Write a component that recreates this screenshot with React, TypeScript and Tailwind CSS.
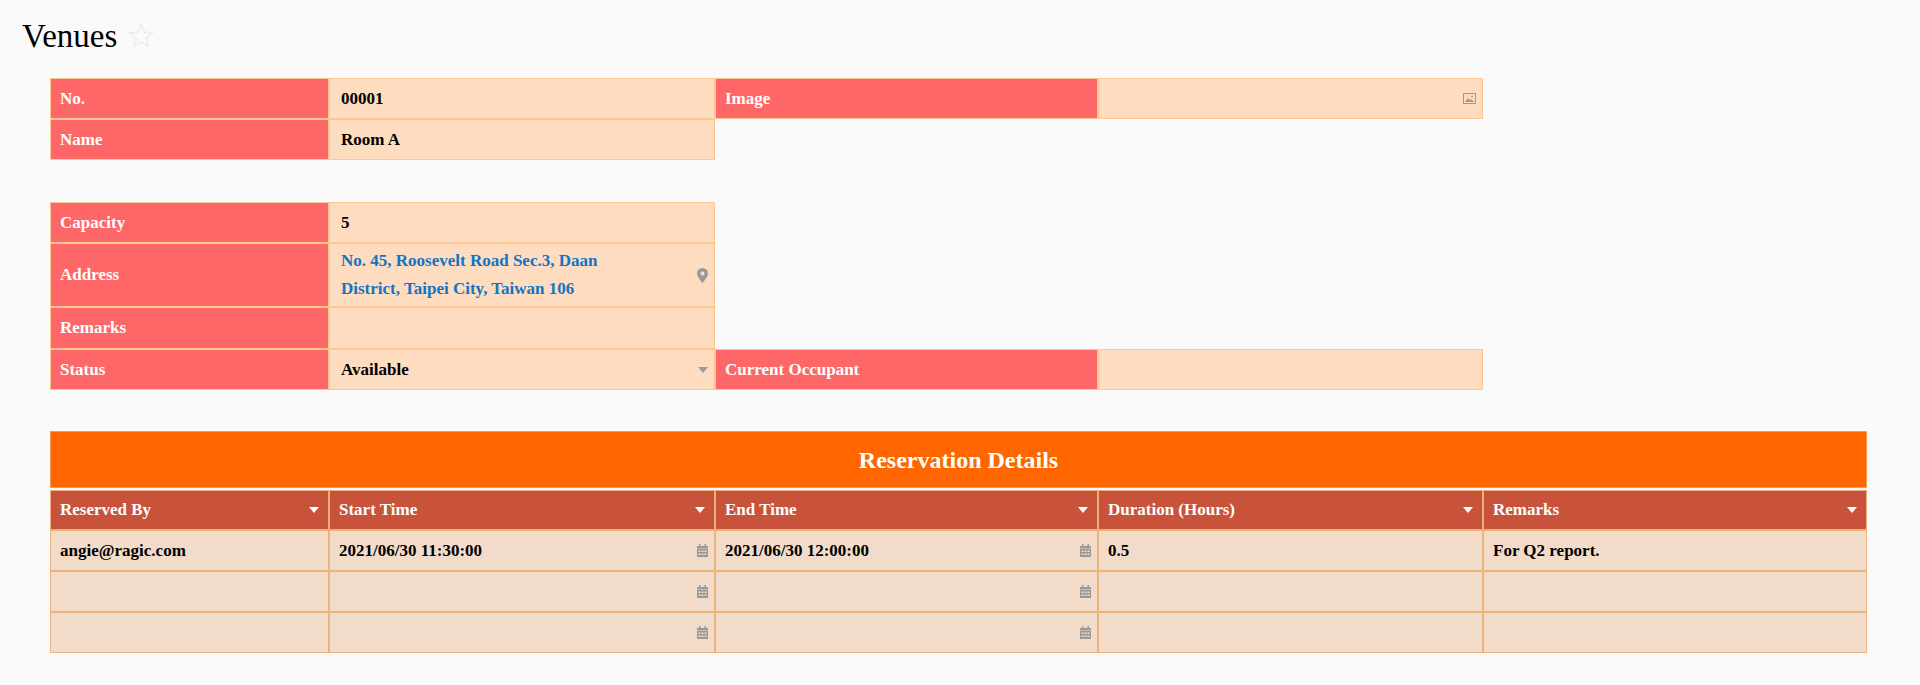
import React from "react";

const F = { fontFamily: '"Liberation Serif", "DejaVu Serif", serif' };

function Label({ children, h = "h-[41px]" }: { children?: React.ReactNode; h?: string }) {
  return (
    <div className={`${h} bg-[#fe6767] border border-[#fbc795] flex items-center px-[9px] text-white font-bold text-[17px]`}>
      {children}
    </div>
  );
}
function Val({ children, h = "h-[41px]", icon }: { children?: React.ReactNode; h?: string; icon?: React.ReactNode }) {
  return (
    <div className={`${h} bg-[#fddcbf] border border-[#fbc795] flex items-center justify-between pl-[11px] pr-[6px] text-black font-bold text-[17px]`}>
      <div>{children}</div>
      {icon}
    </div>
  );
}

const Caret = ({ c = "#9b9b9b" }: { c?: string }) => (
  <svg width="10" height="6" viewBox="0 0 10 6"><path d="M0 0h10L5 6z" fill={c} /></svg>
);
const Cal = () => (
  <svg width="11" height="13" viewBox="0 0 11 13" fill="#999">
    <rect x="2" y="0" width="1.5" height="3" />
    <rect x="7.5" y="0" width="1.5" height="3" />
    <rect x="0" y="2" width="11" height="2.5" />
    <path d="M0 5h11v8H0z M1.5 6.5v1.5h2V6.5z M4.5 6.5v1.5h2V6.5z M7.5 6.5v1.5h2V6.5z M1.5 9.5v1.5h2V9.5z M4.5 9.5v1.5h2V9.5z M7.5 9.5v1.5h2V9.5z" fillRule="evenodd" />
  </svg>
);
const Pin = () => (
  <svg width="11" height="15" viewBox="0 0 11 15"><path d="M5.5 0A5.5 5.5 0 0 0 0 5.5C0 9 5.5 15 5.5 15S11 9 11 5.5A5.5 5.5 0 0 0 5.5 0zm0 7.5a2 2 0 1 1 0-4 2 2 0 0 1 0 4z" fill="#999" /></svg>
);
const Img = () => (
  <svg width="13" height="11" viewBox="0 0 13 11"><rect x="0.5" y="0.5" width="12" height="10" fill="none" stroke="#999" /><path d="M2 9l3-4 2 2.5 1.5-1.5L11 9z" fill="#999" /><circle cx="9" cy="3.5" r="1" fill="#999" /></svg>
);

function HCell({ children }: { children: React.ReactNode }) {
  return (
    <div className="h-[40px] bg-[#c9523b] border border-[#efae7e] flex items-center justify-between px-[9px] text-white font-bold text-[17px]">
      <span>{children}</span>
      <Caret c="#ffffff" />
    </div>
  );
}
function DCell({ children, cal }: { children?: React.ReactNode; cal?: boolean }) {
  return (
    <div className="h-[41px] bg-[#f2dcc9] border border-[#ebb47f] flex items-center justify-between pl-[9px] pr-[6px] text-black font-bold text-[17px]">
      <span>{children}</span>
      {cal && <Cal />}
    </div>
  );
}

export default function App() {
  const cols = "grid grid-cols-[279px_386px_383px_385px]";
  return (
    <div className="min-h-[685px] bg-[#fafafa] pt-[16px]" style={F}>
      <div className="flex items-center gap-[10px] pl-[22px] h-[40px]">
        <h1 className="text-[33px] text-black leading-none">Venues</h1>
        <svg width="28" height="28" viewBox="0 0 24 24"><path d="M12 2.5l2.9 6.2 6.6.7-5 4.5 1.4 6.6L12 17.2l-5.9 3.3 1.4-6.6-5-4.5 6.6-.7z" fill="none" stroke="#ececec" strokeWidth="1.5" /></svg>
      </div>

      <div className="pl-[50px] mt-[22px]">
        <div className={cols}>
          <Label>No.</Label>
          <Val>00001</Val>
          <Label>Image</Label>
          <Val icon={<Img />} />
          <Label>Name</Label>
          <Val>Room A</Val>
        </div>

        <div className={`${cols} mt-[42px]`}>
          <Label>Capacity</Label>
          <Val>5</Val>
          <div />
          <div />
          <Label h="h-[64px]">Address</Label>
          <Val h="h-[64px]" icon={<Pin />}>
            <div className="text-[#1474c4] leading-[28px]">No. 45, Roosevelt Road Sec.3, Daan<br />District, Taipei City, Taiwan 106</div>
          </Val>
          <div />
          <div />
          <Label h="h-[42px]">Remarks</Label>
          <Val h="h-[42px]" />
          <div />
          <div />
          <Label>Status</Label>
          <Val icon={<Caret />}>Available</Val>
          <Label>Current Occupant</Label>
          <Val />
        </div>

        <div className="w-[1817px] mt-[41px]">
          <div className="h-[57px] bg-[#ff6600] border border-[#f79a5a] flex items-center justify-center text-white font-bold text-[24px]">
            Reservation Details
          </div>
          <div className="grid grid-cols-[279px_386px_383px_385px_384px] mt-[2px]">
            <HCell>Reserved By</HCell>
            <HCell>Start Time</HCell>
            <HCell>End Time</HCell>
            <HCell>Duration (Hours)</HCell>
            <HCell>Remarks</HCell>
            <DCell>angie@ragic.com</DCell>
            <DCell cal>2021/06/30 11:30:00</DCell>
            <DCell cal>2021/06/30 12:00:00</DCell>
            <DCell>0.5</DCell>
            <DCell>For Q2 report.</DCell>
            <DCell />
            <DCell cal />
            <DCell cal />
            <DCell />
            <DCell />
            <DCell />
            <DCell cal />
            <DCell cal />
            <DCell />
            <DCell />
          </div>
        </div>
      </div>
    </div>
  );
}
